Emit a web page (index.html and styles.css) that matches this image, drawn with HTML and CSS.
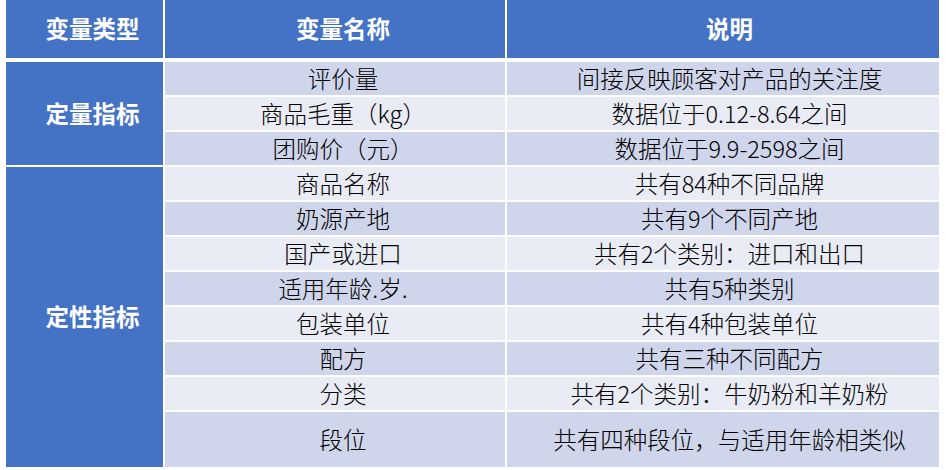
FILE: index.html
```html
<!DOCTYPE html>
<html lang="zh-CN">
<head>
<meta charset="utf-8">
<title>变量说明</title>
<link rel="stylesheet" href="styles.css">
</head>
<body>
<div class="table">
  <div class="head">
    <div class="cell hcell">变量类型</div>
    <div class="cell hcell">变量名称</div>
    <div class="cell hcell desc">说明</div>
  </div>
  <div class="body">
    <div class="cell group g1">定量指标</div>
    <div class="cell dark">评价量</div><div class="cell dark desc">间接反映顾客对产品的关注度</div>
    <div class="cell light">商品毛重（kg）</div><div class="cell light desc">数据位于0.12-8.64之间</div>
    <div class="cell dark">团购价（元）</div><div class="cell dark desc">数据位于9.9-2598之间</div>
    <div class="cell group g2">定性指标</div>
    <div class="cell light">商品名称</div><div class="cell light desc">共有84种不同品牌</div>
    <div class="cell dark">奶源产地</div><div class="cell dark desc">共有9个不同产地</div>
    <div class="cell light">国产或进口</div><div class="cell light desc">共有2个类别：进口和出口</div>
    <div class="cell dark">适用年龄.岁.</div><div class="cell dark desc">共有5种类别</div>
    <div class="cell light">包装单位</div><div class="cell light desc">共有4种包装单位</div>
    <div class="cell dark">配方</div><div class="cell dark desc">共有三种不同配方</div>
    <div class="cell light">分类</div><div class="cell light desc">共有2个类别：牛奶粉和羊奶粉</div>
    <div class="cell dark">段位</div><div class="cell dark desc">共有四种段位，与适用年龄相类似</div>
  </div>
</div>
</body>
</html>
```
FILE: styles.css
```css
html, body {
  margin: 0;
  padding: 0;
  background: #ffffff;
}

body {
  font-family: "Noto Sans CJK SC", "Noto Sans", sans-serif;
  font-size: 23.5px;
  font-weight: 300;
  color: #000000;
}

.table {
  margin-left: 6px;
  width: 933px;
  display: flex;
  flex-direction: column;
  gap: 4px;
}

.head,
.body {
  display: grid;
  grid-template-columns: 157px 340px 432px;
  column-gap: 2px;
}

.head {
  grid-template-rows: 58px;
}

.body {
  grid-template-rows: repeat(10, 33px) 55px;
  row-gap: 2px;
}

.cell {
  display: flex;
  align-items: center;
  justify-content: center;
  padding-left: 16px;
  white-space: nowrap;
  line-height: 1;
}

.desc {
  padding-left: 13px;
}

.hcell,
.group {
  background: #4472c4;
  color: #ffffff;
  font-weight: 700;
}

.g1 {
  grid-column: 1;
  grid-row: 1 / span 3;
}

.g2 {
  grid-column: 1;
  grid-row: 4 / span 8;
}

.dark {
  background: #cfd5ea;
}

.light {
  background: #e9ebf5;
}
```
